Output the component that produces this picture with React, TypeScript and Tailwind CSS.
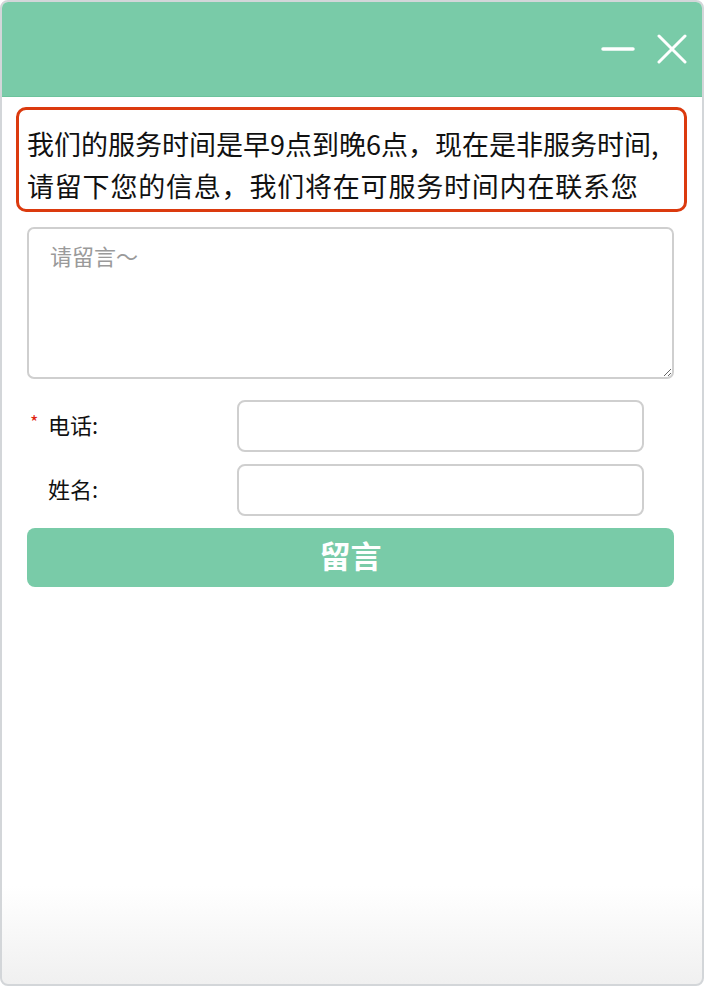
const font = "font-['PingFang_SC','Noto_Sans_CJK_SC',sans-serif]";

const App = () => {
  return (
    <div className={`w-[704px] h-[986px] bg-white ${font}`}>
      <div className="w-full h-full flex flex-col border-2 border-[#d3d6d9] rounded-[8px] overflow-hidden bg-gradient-to-b from-white from-[90%] to-[#f0f0f0]">
        {/* Header */}
        <div className="h-[95px] shrink-0 bg-[#79cba8] border-b border-[#6cc39c] flex items-center justify-end pr-[15px] gap-[22px]">
          <svg width="34" height="6" viewBox="0 0 34 6">
            <line x1="2" y1="3" x2="32" y2="3" stroke="white" strokeWidth="3.5" strokeLinecap="round" />
          </svg>
          <svg width="30" height="30" viewBox="0 0 30 30">
            <path d="M2 2 L28 28 M28 2 L2 28" stroke="white" strokeWidth="3" strokeLinecap="round" />
          </svg>
        </div>

        {/* Notice */}
        <div className="pl-[14px] pr-[15px] pt-[10px]">
          <div className="border-[3px] border-[#db3a0e] rounded-[10px] h-[105px] pl-[8px] pt-[13px] text-[27px] leading-[42px] text-[#111] whitespace-nowrap">
            <div>我们的服务时间是早9点到晚6点，现在是非服务时间,</div>
            <div className="tracking-[0.8px]">请留下您的信息，我们将在可服务时间内在联系您</div>
          </div>
        </div>

        {/* Form */}
        <div className="pl-[25px] pr-[28px] pt-[15px] flex flex-col">
          <textarea
            placeholder="请留言～"
            className="h-[152px] w-full border-2 border-[#cfcfcf] rounded-[7px] px-[21px] py-[10px] text-[22px] leading-[32px] placeholder:text-[#9a9a9a] outline-none"
          />

          <div className="mt-[21px] flex items-center h-[52px]">
            <div className="w-[210px] flex items-center text-[22px] text-[#111] -mt-[4px]">
              <span className="w-[21px] text-[#e0230f] text-[18px] pl-[3px] -mt-[6px]">*</span>
              <span>电话:</span>
            </div>
            <input className="w-[407px] h-[52px] border-2 border-[#cfcfcf] rounded-[8px] outline-none" />
          </div>

          <div className="mt-[12px] flex items-center h-[52px]">
            <div className="w-[210px] flex items-center text-[22px] text-[#111] -mt-[4px]">
              <span className="w-[21px]" />
              <span>姓名:</span>
            </div>
            <input className="w-[407px] h-[52px] border-2 border-[#cfcfcf] rounded-[8px] outline-none" />
          </div>

          <button className="mt-[12px] h-[59px] w-full bg-[#79cba8] rounded-[8px] text-white text-[31px] leading-[40px] font-bold pb-[6px]">
            留言
          </button>
        </div>
      </div>
    </div>
  );
};

export default App;
